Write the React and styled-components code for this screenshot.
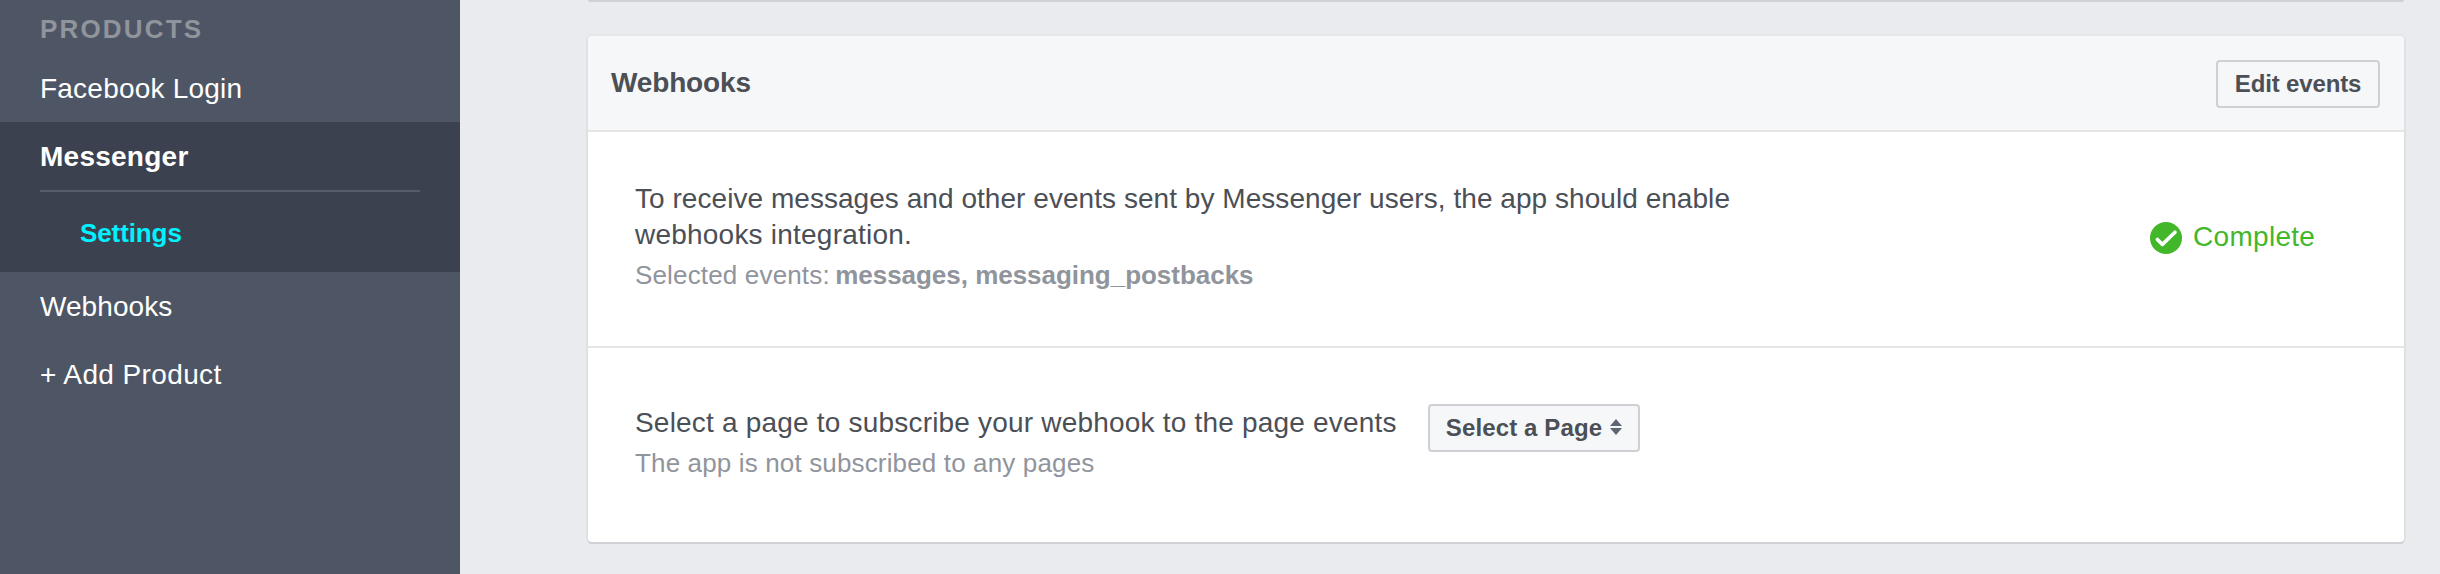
import React from 'react';
import styled, { createGlobalStyle } from 'styled-components';

const GlobalStyle = createGlobalStyle`
  * { box-sizing: border-box; }
  body {
    margin: 0;
    background: #e9ebee;
    color: #4b4f56;
    font-family: "Liberation Sans", Arial, sans-serif;
    font-size: 28px;
  }
`;

const Page = styled.div`
  display: flex;
  width: 2440px;
  height: 574px;
  overflow: hidden;
`;

const Sidebar = styled.nav`
  flex: 0 0 460px;
  background: #4e5665;
  color: #fff;
`;

const SidebarTitle = styled.h2`
  margin: 0;
  height: 54px;
  padding: 14px 0 0 40px;
  font-size: 26px;
  line-height: 30px;
  letter-spacing: 2.16px;
  color: #90949c;
`;

const NavItem = styled.a`
  display: block;
  padding-left: 40px;
  height: 68px;
  line-height: 69px;
  letter-spacing: ${(p) => p.$spacing || 0}px;
  font-weight: ${(p) => (p.$bold ? 700 : 400)};
`;

const ActiveGroup = styled.div`
  height: 150px;
  background: #3b414e;
`;

const NavDivider = styled.div`
  height: 2px;
  margin: 0 40px;
  background: #565c69;
`;

const SubItem = styled.a`
  display: block;
  padding-left: 80px;
  font-size: 26px;
  font-weight: 700;
  line-height: 82px;
  letter-spacing: -0.1px;
  color: #00f1ff;
`;

const Main = styled.main`
  flex: 1;
  padding: 0 36px 0 128px;
`;

const PreviousPanelEdge = styled.div`
  height: 2px;
  margin-bottom: 34px;
  background: #d0d1d5;
  border-radius: 0 0 4px 4px;
`;

const Panel = styled.section`
  height: 506px;
  background: #fff;
  border-radius: 4px;
  box-shadow: 0 2px 0 0 #d0d1d5, 0 -2px 0 0 #e5e6e9, 0 0 0 2px #e0e1e5;
`;

const PanelHeader = styled.header`
  display: flex;
  justify-content: space-between;
  height: 96px;
  padding: 24px 24px 0 23px;
  background: #f6f7f9;
  border-bottom: 2px solid #e5e5e5;
  border-radius: 4px 4px 0 0;
`;

const PanelTitle = styled.h1`
  margin: 0;
  font-size: 28px;
  line-height: 45px;
  letter-spacing: -0.15px;
`;

const Button = styled.button`
  display: flex;
  align-items: center;
  justify-content: center;
  gap: 8px;
  width: ${(p) => p.$width}px;
  height: 48px;
  padding: 0 0 1px;
  border: 2px solid #ced0d4;
  border-radius: 4px;
  background: #f6f7f9;
  color: #4b4f56;
  font: 700 24px/28px "Liberation Sans", Arial, sans-serif;
  letter-spacing: ${(p) => p.$spacing}px;
  white-space: nowrap;

  svg { margin-top: -1px; }
`;

const Section = styled.div`
  display: flex;
  padding: ${(p) => p.$top}px 88.8px 0 47px;
  height: ${(p) => p.$height}px;
  border-bottom: ${(p) => (p.$divided ? '2px solid #e5e5e5' : '0')};
`;

const Copy = styled.div`
  flex: none;
  padding-top: 1px;
  margin-right: 31.3px;
`;

const Line = styled.p`
  margin: 0;
  line-height: 36px;
  white-space: nowrap;
  letter-spacing: ${(p) => p.$spacing}px;
`;

const Note = styled.p`
  margin: 4px 0 0;
  font-size: 26px;
  line-height: 36px;
  letter-spacing: ${(p) => p.$spacing}px;
  color: #90949c;

  strong {
    margin-left: -2px;
    letter-spacing: -0.026px;
  }
`;

const Status = styled.div`
  display: flex;
  align-items: center;
  gap: 11px;
  height: 32px;
  margin: 42px 0 0 auto;
  color: #42b72a;
  letter-spacing: 0.29px;
`;

const StatusLabel = styled.span`
  line-height: 32px;
  margin-top: -2px;
`;

const CheckIcon = () => (
  <svg width="32" height="32" viewBox="0 0 32 32">
    <circle cx="16" cy="16" r="16" fill="#42b72a" />
    <path d="M7.4 17.4 12.4 22.4 25 10.2" fill="none" stroke="#fff" strokeWidth="3.6" strokeLinecap="round" strokeLinejoin="round" />
  </svg>
);

const SortIcon = () => (
  <svg width="12" height="16" viewBox="0 0 12 16">
    <path d="M0 7 6 0l6 7zM0 9h12l-6 7z" fill="#5f6673" />
  </svg>
);

export default function App() {
  return (
    <Page>
      <GlobalStyle />
      <Sidebar>
        <SidebarTitle>PRODUCTS</SidebarTitle>
        <NavItem $spacing={0.22}>Facebook Login</NavItem>
        <ActiveGroup>
          <NavItem $bold $spacing={0.25}>Messenger</NavItem>
          <NavDivider />
          <SubItem>Settings</SubItem>
        </ActiveGroup>
        <NavItem $spacing={0.06}>Webhooks</NavItem>
        <NavItem $spacing={0.38}>+ Add Product</NavItem>
      </Sidebar>
      <Main>
        <PreviousPanelEdge />
        <Panel>
          <PanelHeader>
            <PanelTitle>Webhooks</PanelTitle>
            <Button $width={164} $spacing={-0.15}>Edit events</Button>
          </PanelHeader>
          <Section $top={48} $height={216} $divided>
            <Copy>
              <Line $spacing={0.047}>To receive messages and other events sent by Messenger users, the app should enable</Line>
              <Line $spacing={0.22}>webhooks integration.</Line>
              <Note $spacing={0.16}>
                Selected events: <strong>messages, messaging_postbacks</strong>
              </Note>
            </Copy>
            <Status>
              <CheckIcon />
              <StatusLabel>Complete</StatusLabel>
            </Status>
          </Section>
          <Section $top={56} $height={194}>
            <Copy>
              <Line $spacing={0.197}>Select a page to subscribe your webhook to the page events</Line>
              <Note $spacing={0.147}>The app is not subscribed to any pages</Note>
            </Copy>
            <Button $width={212} $spacing={0.13}>
              Select a Page
              <SortIcon />
            </Button>
          </Section>
        </Panel>
      </Main>
    </Page>
  );
}
